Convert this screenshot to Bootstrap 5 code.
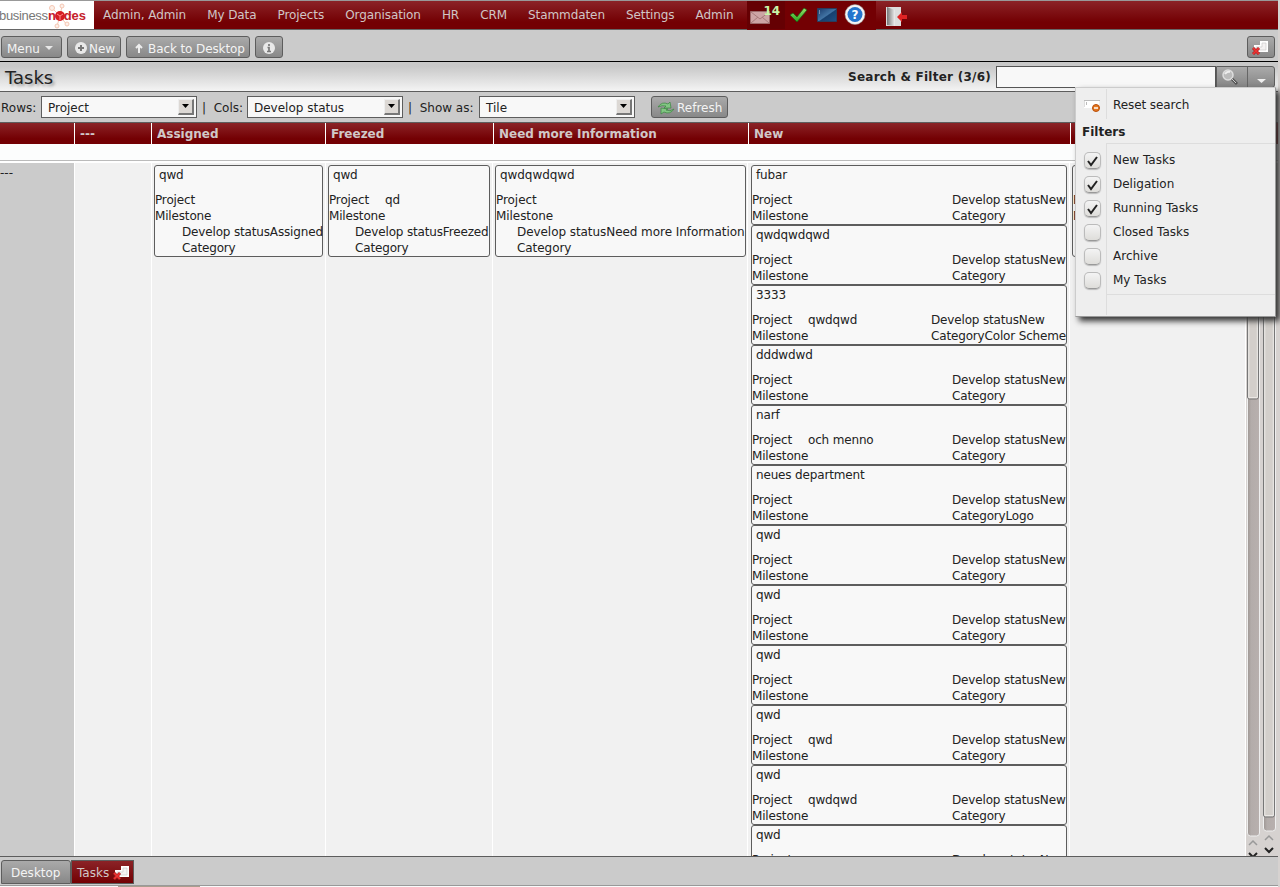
<!DOCTYPE html>
<html lang="en">
<head>
<meta charset="utf-8">
<meta name="viewport" content="width=device-width, initial-scale=1">
<title>Tasks</title>
<link href="https://cdn.jsdelivr.net/npm/bootstrap@5.3.0/dist/css/bootstrap.min.css" rel="stylesheet">
<style>
html,body{height:887px;overflow:hidden}
body{font:12px/16px "DejaVu Sans",sans-serif;color:#222;background:#d6d2d0;white-space:nowrap}
svg{display:block;flex:none}
.shell{width:1278px;height:887px;background:#cbcbcb;overflow:hidden}
.topbar{height:30px;border-top:1px solid #999;border-bottom:1px solid #666;background:linear-gradient(#8b2327,#730003 75%)}
.topbar a{color:#d1c5c5;text-decoration:none;margin-right:21.1px;line-height:28px;letter-spacing:-.09px}
.topbar .first{margin-left:9px}
.brand{width:94px;height:28px;background:#fff}
.icons{height:29px;margin-left:-8px;width:129px;background:#730003;position:relative}
.mailbox{background:#650003;width:38px;height:28px}
.count{left:17px;top:1px;font-weight:bold;color:#c8f5a8;line-height:18px}
.toolbar{height:32px;border-bottom:1px solid #000;padding:3px 3px 0 1px;gap:5px}
.gbtn{height:22px;border:1px solid #5d5d5d;border-radius:3px;background:linear-gradient(#aaa,#888);color:#f4f4f4;padding:2px 5px 0;font-size:12px;line-height:16px;display:flex;align-items:center}
.toolbar .gbtn{padding-top:3px}
.titlebar{height:30px;border-bottom:1px solid #5d5d5d;background:linear-gradient(#c8c8c8 15%,#f4f4f4)}
.titlebar h1{font-size:18px;line-height:29px;margin:2px 0 0 5px;text-shadow:2px 2px 3px #999}
.caption-text{letter-spacing:.25px}
.search{width:220px;height:22px;background:#f8f8f8;border:1px solid #555;margin-left:5px}
.split{width:59px;height:22px;border:1px solid #5d5d5d;border-radius:0 3px 3px 0;background:linear-gradient(#aaa,#858585);margin-right:3px}
.split i{width:1px;height:20px;background:#666}
.options{height:31px;border-bottom:1px solid #5d5d5d;padding-left:1px}
.options>span{padding-top:1px}
.pick{width:156px;height:22px;border:1px solid #5d5d5d;background:#f8f8f8;padding:2px 2px 0 6px;line-height:18px;margin-top:-1px}
.pick b{width:16px;height:16px;background:#dcd8d4;border:1px solid #eee;border-right:2px solid #777;border-bottom:2px solid #777;display:flex;align-items:center;justify-content:center}
.heads{height:21px;display:grid;background:#fff;grid-template-columns:74px 76px 173px 167px 254px 321px 1fr;column-gap:1px}
.heads div{background:linear-gradient(#8b2327,#730003 75%);color:#d1c8c8;font-weight:bold;padding:1px 0 0 5px;line-height:20px}
.spacer{height:17px;background:#fcfdfd;border-bottom:1px solid #bbb}
.board{height:696px;display:grid;background:#fff;grid-template-columns:74px 76px 173px 166px 254px 321px 175px 32px;column-gap:1px;padding-top:2px;overflow:hidden;border-bottom:1px solid #5d5d5d}
.lane{background:#f1f1f1;padding:2px;min-width:0;overflow:hidden}
.lane[data-tiles="New"]{padding-left:3px}
.lane[data-tiles^="Need"]{padding-right:1px}
.tile{border:1px solid #5d5d5d;border-radius:3px;background:#f8f8f8;height:60px;padding-top:1px;letter-spacing:-.16px}
.lane[data-tiles^="Need"] .tile{letter-spacing:-.06px}
.tile.tall{height:92px}
.tile .name{padding-left:4px;margin-bottom:9px}
.lab{width:56px;flex:none}
.scroll{position:relative;background:#d6d2d0}
.footer{height:28px;padding:3px 0 0 1px}
.tab-item{height:24px;border:1px solid #5d5d5d;border-radius:3px 3px 0 0;background:linear-gradient(#aaa,#888);color:#f4f4f4;display:flex;align-items:center;padding-top:1px}
.tab-item.active{background:linear-gradient(#8b2327,#730003);color:#d1c8c8;border-radius:0}
.bottom{height:2px;background:#fafafa;border-top:1px solid #999}
.filter-menu{left:1075px;top:87px;width:201px;height:230px;background:#eee;border:1px solid #ccc;border-right-color:#999;border-bottom-color:#999;box-shadow:4px 4px 6px #333;padding-top:1px}
.frow{height:24px}
.gut{width:31px;border-right:1px solid #ddd;align-self:stretch;padding:4px 0 0 8px;flex:none}
.frow span{padding:4px 0 0 6px}
.ck{width:17px;height:17px;border:1px solid #bbb;border-bottom-color:#999;border-radius:5px;background:linear-gradient(#f4f4f4,#deddda);box-shadow:0 1px 1px #bbb}
</style>
</head>
<body>
<svg width="0" height="0" class="position-absolute"><defs>
<g id="closewin"><path d="M8 1h8v11H2V5h6z" fill="#fff"/><path d="M10 3h4v7H4V7h6z" fill="#f4f2f2" stroke="#ccc" stroke-width=".7"/><path d="M1 8l6 6M7 8l-6 6" stroke="#a22" stroke-width="3"/><path d="M1 8l6 6M7 8l-6 6" stroke="#e33" stroke-width="1.7"/></g>
<linearGradient id="gr" x2="0" y2="1"><stop stop-color="#9be26c"/><stop offset="1" stop-color="#26a31b"/></linearGradient>
<linearGradient id="blue" x2="1" y2="1"><stop stop-color="#17396a"/><stop offset=".5" stop-color="#4274a4"/><stop offset=".55" stop-color="#17406f"/><stop offset="1" stop-color="#1f5184"/></linearGradient>
<linearGradient id="door"><stop stop-color="#777"/><stop offset="1" stop-color="#eee"/></linearGradient>
<linearGradient id="track"><stop stop-color="#9d9693"/><stop offset=".3" stop-color="#b3acaa"/><stop offset="1" stop-color="#b8b0ae"/></linearGradient>
</defs></svg>
<div class="shell">
<nav class="topbar d-flex">
  <div class="brand"><svg width="94" height="28"><g fill="#fdf0e9" stroke="#f5c6b2"><path d="M60 15L52 7M60 15l2-10M60 15l7 9M60 15l-3 10M60 15l14-2"/><circle cx="52" cy="7" r="2.500"/><circle cx="62" cy="5" r="2"/><circle cx="67" cy="23" r="2"/><circle cx="57" cy="25" r="2"/></g><text x="-1" y="19" font-family="Liberation Sans" font-size="13" fill="#777" textLength="49">business</text><text x="48" y="19" font-family="Liberation Sans" font-weight="bold" font-size="13" fill="#c5202c" textLength="38">nodes</text><circle cx="60" cy="15" r="5" fill="#d51c22"/><path d="M57 13l3 2 3-2M60 15v4" fill="none" stroke="#f88"/></svg></div>
  <a class="first" href="#">Admin, Admin</a><a href="#">My Data</a><a href="#">Projects</a><a href="#">Organisation</a><a href="#">HR</a><a href="#">CRM</a><a href="#">Stammdaten</a><a href="#">Settings</a><a href="#">Admin</a>
  <div class="icons d-flex"><div class="mailbox"><svg width="38" height="28"><path d="M3.500 10.500h19v12h-19z" fill="#cda5a5" stroke="#9c6a6a"/><path d="M4 11l9 7 9-7M4 22l7-6M22 22l-7-6" fill="none" stroke="#a87a7a"/></svg></div><span class="count position-absolute">14</span>
  <svg width="91" height="28"><path d="M5 14l3-2 4 4 7-9 3 2-10 12z" fill="url(#gr)" stroke="#175b13" stroke-width=".7"/><path d="M32.500 7.500h19v13h-19z" fill="url(#blue)" stroke="#2a3c5c"/><path d="M34 10h1M34 12h1" stroke="#ccc"/><circle cx="70" cy="13.500" r="10" fill="#f4f4f4" stroke="#999" stroke-width=".5"/><circle cx="70" cy="13.500" r="7.500" fill="#2475cd"/><text x="70" y="18" text-anchor="middle" font-family="DejaVu Sans" font-weight="bold" font-size="12" fill="#fff">?</text></svg></div>
  <svg class="ms-2" width="34" height="28"><path d="M2 6h15v19H2z" fill="#ddd"/><path d="M3 6l8 3v16l-8-1z" fill="url(#door)"/><path d="M13 16l5-5v3h5v4h-5v3z" fill="#df2424"/></svg>
</nav>
<div class="toolbar d-flex align-items-center">
  <button class="gbtn" style="width:61px">Menu<svg width="8" height="5" style="margin-left:5px"><path d="M0 0h8L4 4z" fill="#e8e8e8"/></svg></button>
  <button class="gbtn" style="width:54px"><svg width="16" height="14"><circle cx="8" cy="6" r="6" fill="#e9e9e9"/><path d="M8 3v6M5 6h6" stroke="#777" stroke-width="2"/></svg>New</button>
  <button class="gbtn" style="width:124px;letter-spacing:-.1px"><svg width="16" height="12"><path d="M7 2v8M4 5l3-3 3 3" fill="none" stroke="#eee" stroke-width="2"/></svg>Back to Desktop</button>
  <button class="gbtn" style="width:28px"><svg width="17" height="14"><circle cx="8" cy="6" r="6" fill="#e9e9e9"/><path d="M8 2v2M6.500 5.500H8v4M6 9.500h4" fill="none" stroke="#777" stroke-width="1.700"/></svg></button>
  <button class="gbtn ms-auto p-0 justify-content-center" style="width:28px"><svg width="18" height="15"><use href="#closewin"/></svg></button>
</div>
<div class="titlebar d-flex align-items-center">
  <h1>Tasks</h1><strong class="ms-auto caption-text">Search &amp; Filter (3/6)</strong><div class="search"></div>
  <div class="split d-flex"><svg width="30" height="20"><path d="M14 11l6 6" stroke="#555" stroke-width="3"/><path d="M14 11l5 5" stroke="#ccc"/><circle cx="11" cy="8" r="5" fill="#bbb" stroke="#ddd" stroke-width="1.500"/><path d="M8 7q2-3 5-2" fill="none" stroke="#eee" stroke-width="2"/></svg><i></i><svg width="26" height="20"><path d="M9 12h9l-4.500 4z" fill="#f0f0f0"/></svg></div>
</div>
<div class="options d-flex align-items-center">
  <span style="width:40px">Rows:</span><div class="pick d-flex justify-content-between">Project<b><svg width="7" height="4"><path d="M0 0h7L3.500 4z"/></svg></b></div>
  <span style="width:50px;padding-left:5px">|&nbsp; Cols:</span><div class="pick d-flex justify-content-between">Develop status<b><svg width="7" height="4"><path d="M0 0h7L3.500 4z"/></svg></b></div>
  <span style="width:76px;padding-left:5px">|&nbsp; Show as:</span><div class="pick d-flex justify-content-between">Tile<b><svg width="7" height="4"><path d="M0 0h7L3.500 4z"/></svg></b></div>
  <button class="gbtn" style="width:77px;margin-left:16px"><svg width="20" height="16"><path d="M1 7q4-6 10-3l2-2 1 6H7l2-2Q5 5 1 7zM17 9q-4 6-10 3l-3 2V8l7 1-2 1q4 2 8-1z" fill="#82c783" stroke="#3b8541" stroke-width=".7"/></svg>Refresh</button>
</div>
<div class="heads"><div></div><div>---</div><div>Assigned</div><div>Freezed</div><div>Need more Information</div><div>New</div><div></div></div>
<div class="spacer"></div>
<main class="board">
  <div style="background:#cbcbcb;padding-top:2px">---</div><div class="lane"></div>
  <div class="lane" data-tiles="Assigned"></div><div class="lane" data-tiles="Freezed"></div><div class="lane" data-tiles="Need more Information"></div><div class="lane" data-tiles="New"></div><div class="lane" data-tiles="Other"></div>
  <div class="scroll"><svg width="31" height="694"><g fill="url(#track)" stroke="#eee"><rect x="1.500" y="-5" width="12" height="678" rx="3"/><rect x="17.500" y="-5" width="12" height="673" rx="3"/></g><g fill="#d3cfcb" stroke="#777"><rect x="1.500" y="-5" width="11" height="241" rx="2"/><rect x="17.500" y="-5" width="11" height="659" rx="2"/></g><path d="M2.800-5V234.500h8.500V-5M18.800-5V652.500h8.500V-5" fill="none" stroke="#ece9e6"/><path d="M3 682l4-4 4 4M19 677l4-4 4 4" fill="none" stroke="#999" stroke-width="1.500"/><path d="M3 690l4 4 4-4M19 685l4 4 4-4" fill="none" stroke="#222" stroke-width="2"/></svg></div>
</main>
<div class="footer d-flex"><div class="tab-item" style="width:70px;padding-left:9px">Desktop</div><div class="tab-item active" style="width:63px;padding-left:5px">Tasks<svg class="ms-1" width="18" height="15"><use href="#closewin"/></svg></div></div>
<div class="bottom d-flex"><div style="width:118px"></div><div style="width:82px;background:#aa9d8d"></div></div>
</div>
<div class="filter-menu position-absolute">
  <div class="frow d-flex" style="height:30px"><div class="gut"><svg width="18" height="20"><path d="M0 7h15v8H0z" fill="#fff"/><path d="M0 14V7.500h16M2.500 9v3" fill="none" stroke="#bbb"/><circle cx="12" cy="15" r="3.500" fill="#e47820" stroke="#ba4f0b"/><path d="M10 15h4" stroke="#fff" stroke-width="1.500"/></svg></div><span style="padding-top:8px;letter-spacing:-.08px">Reset search</span></div>
  <strong class="d-block" style="padding:5px 0 0 6px;height:24px">Filters</strong>
  <div class="d-flex" style="height:5px"><div class="gut p-0"></div><div class="flex-fill" style="border-top:1px solid #ddd"></div></div>
  <div id="filters"></div>
  <div class="d-flex" style="height:23px"><div class="gut"></div><div class="flex-fill" style="border-top:1px solid #ddd;margin-top:2px"></div></div>
</div>
<script>
const filters=[['New Tasks',1],['Deligation',1],['Running Tasks',1],['Closed Tasks',0],['Archive',0],['My Tasks',0]];
document.getElementById('filters').innerHTML=filters.map(([n,on])=>`<div class="frow d-flex"><div class="gut"><div class="ck">${on?'<svg width="15" height="15"><path d="M3 8l3 4 6-8" fill="none" stroke="#222" stroke-width="2"/></svg>':''}</div></div><span>${n}</span></div>`).join('');
const tiles={
 'Assigned':[['qwd','',27]],'Freezed':[['qwd','qd',26]],'Need more Information':[['qwdqwdqwd','',21]],
 'New':[['fubar'],['qwdqwdqwd'],['3333','qwdqwd',179,'Color Scheme'],['dddwdwd'],['narf','och menno'],['neues department','',200,'Logo'],['qwd'],['qwd'],['qwd'],['qwd','qwd'],['qwd','qwdqwd'],['qwd']],
 'Other':[['']]};
document.querySelectorAll('[data-tiles]').forEach(l=>{
 const s=l.dataset.tiles,wide=s==='New';
 l.innerHTML=tiles[s].map(([name,proj='',x=200,cat=''])=>{
  const left=`<div><div class="d-flex"><div class="lab">Project</div>${proj}</div><div>Milestone</div></div>`;
  const right=s==='Other'?'':`<div>Develop status${s}</div><div>Category${cat}</div>`;
  return `<div class="tile ${wide?'':'tall'}"><div class="name">${name||'&nbsp;'}</div>${wide?`<div class="d-flex"><div class="flex-shrink-0" style="width:${x}px">${left}</div><div>${right}</div></div>`:`${left}<div style="padding-left:${x}px">${right}</div>`}</div>`}).join('');
});
</script>
<script src="https://cdn.jsdelivr.net/npm/bootstrap@5.3.0/dist/js/bootstrap.bundle.min.js"></script>
</body>
</html>
